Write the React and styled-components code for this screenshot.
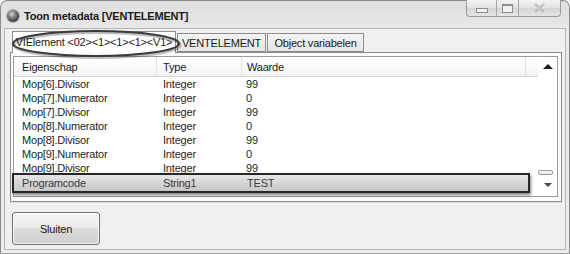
import React from "react";
import styled, { createGlobalStyle } from "styled-components";

const rows = [
  ["Mop[6].Divisor", "Integer", "99"],
  ["Mop[7].Numerator", "Integer", "0"],
  ["Mop[7].Divisor", "Integer", "99"],
  ["Mop[8].Numerator", "Integer", "0"],
  ["Mop[8].Divisor", "Integer", "99"],
  ["Mop[9].Numerator", "Integer", "0"],
  ["Mop[9].Divisor", "Integer", "99"],
];

const App = () => {
  return (
    <>
      <GlobalStyle />
      <Window>
        <TitleBar>
          <AppIcon />
          <Title>Toon metadata [VENTELEMENT]</Title>
          <CaptionButtons>
            <CaptionButton $w={30}>
              <MinGlyph />
            </CaptionButton>
            <CaptionButton $w={22}>
              <MaxGlyph />
            </CaptionButton>
            <CaptionButton $w={41} $last>
              <svg width="13" height="10" viewBox="0 0 13 10">
                <path
                  d="M2 1 L11 9 M11 1 L2 9"
                  stroke="#a4a4a4"
                  strokeWidth="2.2"
                  fill="none"
                />
                <path
                  d="M2 1 L11 9 M11 1 L2 9"
                  stroke="#ececec"
                  strokeWidth="0.8"
                  fill="none"
                />
              </svg>
            </CaptionButton>
          </CaptionButtons>
        </TitleBar>

        <Client>
          <TabStrip>
            <Tab $active $w={164}>
              VIElement &lt;02&gt;&lt;1&gt;&lt;1&gt;&lt;1&gt;&lt;V1&gt;
            </Tab>
            <Tab $w={89}>VENTELEMENT</Tab>
            <Tab $w={97}>Object variabelen</Tab>
            <Annotation width="172" height="30" viewBox="0 0 172 30">
              <ellipse
                cx="86"
                cy="16"
                rx="83"
                ry="12.5"
                fill="none"
                stroke="rgba(0,0,0,0.25)"
                strokeWidth="3"
              />
              <ellipse
                cx="85"
                cy="14.5"
                rx="83"
                ry="12.5"
                fill="none"
                stroke="#3a3a3a"
                strokeWidth="2"
              />
            </Annotation>
          </TabStrip>

          <TabPanel>
            <ListView>
              <ListBody>
                <HeaderRow>
                  <HeaderCell $w={143} $pad={8}>Eigenschap</HeaderCell>
                  <HeaderCell $w={85} $pad={6}>Type</HeaderCell>
                  <HeaderCell $w={284} $pad={5}>Waarde</HeaderCell>
                </HeaderRow>
                {rows.map((r) => (
                  <Row key={r[0]}>
                    <Cell $w={143} $pad={8}>{r[0]}</Cell>
                    <Cell $w={85} $pad={6}>{r[1]}</Cell>
                    <Cell $w={284} $pad={4}>{r[2]}</Cell>
                  </Row>
                ))}
                <Row $marked>
                  <Cell $w={143} $pad={8}>Programcode</Cell>
                  <Cell $w={85} $pad={6}>String1</Cell>
                  <Cell $w={280} $pad={5}>TEST</Cell>
                </Row>
              </ListBody>
              <ScrollBar>
                <ArrowUp />
                <Track>
                  <Thumb />
                </Track>
                <ArrowDown />
              </ScrollBar>
            </ListView>
          </TabPanel>

          <Footer>
            <Button>Sluiten</Button>
          </Footer>
        </Client>
      </Window>
    </>
  );
};

export default App;

const GlobalStyle = createGlobalStyle`
  html, body {
    margin: 0;
    padding: 0;
    background: #ffffff;
  }
  body {
    font-family: "Liberation Sans", Arial, sans-serif;
    font-size: 11px;
    letter-spacing: -0.2px;
    color: #1e1e1e;
  }
`;

const Window = styled.div`
  width: 570px;
  height: 254px;
  box-sizing: border-box;
  border: 1px solid #8a8a8a;
  border-bottom-color: #a0a0a0;
  border-radius: 7px 7px 0 0;
  background: linear-gradient(#dedede, #e9e9e9 30px, #ececec);
  padding: 0 3px 3px 3px;
  display: flex;
  flex-direction: column;
`;

const TitleBar = styled.div`
  height: 27px;
  display: flex;
  align-items: center;
  padding: 0 5px 0 3px;
`;

const AppIcon = styled.div`
  width: 12px;
  height: 12px;
  border-radius: 50%;
  margin-top: 2px;
  background: radial-gradient(circle at 40% 35%, #d8d8d8 0, #8a8a8a 30%, #3c3c3c 70%, #5a5a5a 100%);
  box-shadow: 0 0 0 1px rgba(90, 90, 90, 0.4);
`;

const Title = styled.div`
  margin-left: 5px;
  margin-top: 2px;
  font-weight: bold;
  font-size: 11px;
  color: #1a1a1a;
  flex: 1;
`;

const CaptionButtons = styled.div`
  align-self: flex-start;
  margin-top: -1px;
  display: flex;
  height: 17px;
  box-sizing: border-box;
  border: 1px solid #9a9a9a;
  border-top: none;
  border-radius: 0 0 4px 4px;
  overflow: hidden;
  background: linear-gradient(#f4f4f4, #e2e2e2 50%, #d6d6d6 51%, #e4e4e4);
`;

const CaptionButton = styled.div`
  width: ${(p) => p.$w}px;
  height: 100%;
  display: flex;
  align-items: center;
  justify-content: center;
  border-right: ${(p) => (p.$last ? "none" : "1px solid #a8a8a8")};
  box-sizing: border-box;
`;

const MinGlyph = styled.div`
  width: 10px;
  height: 3px;
  margin-top: 5px;
  border: 1px solid #8c8c8c;
  background: #f2f2f2;
`;

const MaxGlyph = styled.div`
  width: 9px;
  height: 6px;
  border: 1px solid #8c8c8c;
  border-top-width: 2px;
  background: #f2f2f2;
`;

const Client = styled.div`
  flex: 1;
  background: #f0f0f0;
  border: 1px solid #b4b4b4;
  display: flex;
  flex-direction: column;
  padding: 0 3px 0 5px;
  position: relative;
`;

const TabStrip = styled.div`
  position: relative;
  height: 21px;
  margin-top: 2px;
  padding-left: 2px;
  display: flex;
  align-items: flex-end;
  z-index: 1;
`;

const Tab = styled.div`
  width: ${(p) => p.$w}px;
  height: ${(p) => (p.$active ? 22 : 19)}px;
  margin-bottom: ${(p) => (p.$active ? -1 : 0)}px;
  margin-left: ${(p) => (p.$active ? 0 : 1)}px;
  box-sizing: border-box;
  border: 1px solid #8c8c8c;
  border-bottom: ${(p) => (p.$active ? "none" : "1px solid #8c8c8c")};
  background: ${(p) =>
    p.$active ? "#ffffff" : "linear-gradient(#f4f4f4, #e6e6e6)"};
  display: flex;
  align-items: center;
  justify-content: center;
  padding-bottom: ${(p) => (p.$active ? 2 : 0)}px;
  white-space: nowrap;
  color: #1a1a1a;
`;

const Annotation = styled.svg`
  position: absolute;
  left: 1px;
  top: -2px;
  overflow: visible;
  pointer-events: none;
`;

const TabPanel = styled.div`
  height: 150px;
  box-sizing: border-box;
  border: 1px solid #8c8c8c;
  background: #fcfcfc;
  padding: 3px 3px 4px 2px;
`;

const ListView = styled.div`
  height: 100%;
  box-sizing: border-box;
  border: 1px solid #9c9c9c;
  background: #ffffff;
  display: flex;
`;

const ListBody = styled.div`
  flex: 1;
  display: flex;
  flex-direction: column;
`;

const HeaderRow = styled.div`
  display: flex;
  height: 19px;
  border-bottom: 1px solid #d6d6d6;
  background: linear-gradient(#ffffff, #fafafa 60%, #f2f2f2);
`;

const HeaderCell = styled.div`
  width: ${(p) => p.$w}px;
  box-sizing: border-box;
  padding-left: ${(p) => p.$pad}px;
  padding-top: 1px;
  display: flex;
  align-items: center;
  border-right: 1px solid #e2e2e2;
  color: #1a1a1a;
`;

const Row = styled.div`
  display: flex;
  align-items: center;
  height: ${(p) => (p.$marked ? 20 : 14)}px;
  box-sizing: border-box;
  ${(p) =>
    p.$marked &&
    `
    margin: -2px 8px 0 -2px;
    border: 2px solid #262626;
    box-shadow: 1px 2px 3px rgba(0, 0, 0, 0.5);
    background: linear-gradient(#e6e6e6, #d4d4d4 55%, #c8c8c8);
    color: #3a3a3a;
    position: relative;
  `}
`;

const Cell = styled.div`
  width: ${(p) => p.$w}px;
  box-sizing: border-box;
  padding-left: ${(p) => p.$pad}px;
  white-space: nowrap;
`;

const ScrollBar = styled.div`
  width: 19px;
  display: flex;
  flex-direction: column;
  align-items: center;
  background: #ffffff;
`;

const ArrowUp = styled.div`
  margin-top: 7px;
  width: 0;
  height: 0;
  border-left: 5px solid transparent;
  border-right: 5px solid transparent;
  border-bottom: 5px solid #1e1e1e;
  margin-left: 1px;
`;

const Track = styled.div`
  flex: 1;
  width: 100%;
  display: flex;
  flex-direction: column;
  justify-content: flex-end;
  align-items: flex-start;
  padding-bottom: 8px;
`;

const Thumb = styled.div`
  width: 15px;
  height: 5px;
  box-sizing: border-box;
  border: 1px solid #9a9a9a;
  border-radius: 2px;
  background: linear-gradient(#fafafa, #e6e6e6);
`;

const ArrowDown = styled.div`
  margin-bottom: 9px;
  width: 0;
  height: 0;
  border-left: 4px solid transparent;
  border-right: 4px solid transparent;
  border-top: 4px solid #4a4a4a;
  margin-left: 1px;
`;

const Footer = styled.div`
  flex: 1;
  border-top: 1px solid #dcdcdc;
  padding: 9px 0 0 2px;
`;

const Button = styled.div`
  width: 88px;
  height: 33px;
  box-sizing: border-box;
  border: 1px solid #707070;
  border-radius: 3px;
  background: linear-gradient(#f4f4f4, #ececec 45%, #dcdcdc 50%, #cfcfcf);
  box-shadow: inset 0 0 0 1px rgba(255, 255, 255, 0.7);
  display: flex;
  align-items: center;
  justify-content: center;
  color: #1e1e1e;
`;
